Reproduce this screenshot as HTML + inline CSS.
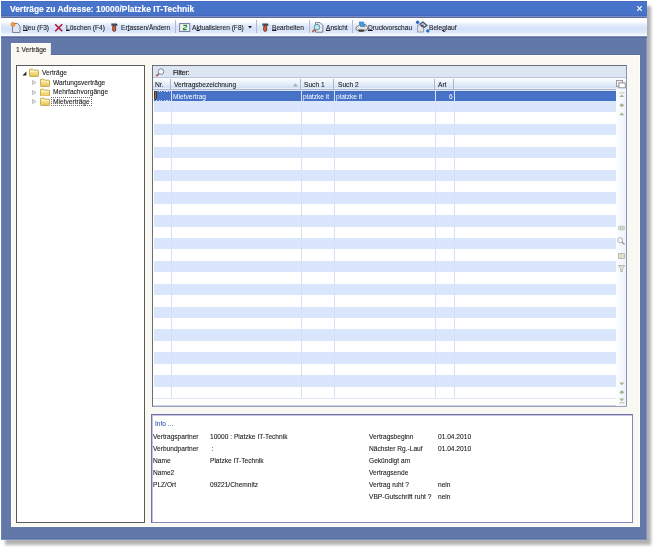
<!DOCTYPE html>
<html><head><meta charset="utf-8">
<style>
*{margin:0;padding:0;box-sizing:border-box}
html,body{width:656px;height:549px;overflow:hidden;background:#fff;font-family:"Liberation Sans",sans-serif;color:#000}
.a{position:absolute;display:block}
.t{position:absolute;white-space:nowrap;line-height:8px;font-size:7.6px;color:#1a1a1a;transform:scaleX(.87);transform-origin:0 0;-webkit-text-stroke:.1px currentColor}
u{text-decoration-thickness:.4px;text-underline-offset:.3px}
#wrap{position:absolute;left:0;top:0;width:656px;height:549px;filter:blur(.35px)}
</style></head><body><div id="wrap">
<div class="a" style="left:5px;top:6px;width:646px;height:539px;background:#909090;filter:blur(1.5px);opacity:.7"></div>
<div class="a" style="left:1px;top:1px;width:646px;height:539px;background:#6178a8;box-shadow:inset 1px 0 0 #7286b8,inset -1px -1px 0 #7e92c2,inset 0 -2px 0 #5a70a2"></div>
<div class="a" style="left:1px;top:1px;width:646px;height:15px;background:linear-gradient(#3d62b8 0,#4874ca 1px,#4672c9 100%);"></div>
<div class="t" style="left:10px;top:2.5px;color:#fff;font-weight:bold;font-size:8.45px;letter-spacing:0;line-height:12px;transform:none;-webkit-text-stroke:.1px #fff">Verträge zu Adresse: 10000/Platzke IT-Technik</div>
<svg class="a" style="left:636px;top:5px" width="7" height="7" viewBox="0 0 7 7"><path d="M1.2 1.2L5.8 5.8M5.8 1.2L1.2 5.8" stroke="#fff" stroke-width="1.1"/></svg>
<div class="a" style="left:1px;top:15px;width:646px;height:1px;background:#4668b8;"></div>
<div class="a" style="left:1px;top:16px;width:646px;height:1px;background:#7890c6;"></div>
<div class="a" style="left:1px;top:17px;width:646px;height:1px;background:#5d6c9c;"></div>
<div class="a" style="left:1px;top:18px;width:646px;height:18px;background:linear-gradient(#ffffff 0%,#fcfdff 20%,#e2ebfb 40%,#d5e1fa 62%,#dde9fb 80%,#eef6fe 92%,#fbfeff 100%);"></div>
<div class="a" style="left:1px;top:36px;width:646px;height:1px;background:#7e8fb8;"></div>
<div class="a" style="left:1px;top:37px;width:646px;height:1px;background:#586a9e;"></div>
<div class="a" style="left:11px;top:54px;width:629px;height:1px;background:#5a6c9e;"></div>
<div class="t" style="left:22.6px;top:23.6px;"><u>N</u>eu (F3)</div>
<div class="t" style="left:65.8px;top:23.6px;"><u>L</u>öschen (F4)</div>
<div class="t" style="left:120.7px;top:23.6px;">Er<u>f</u>assen/Ändern</div>
<div class="t" style="left:191.5px;top:23.6px;">A<u>k</u>tualisieren (F8)</div>
<div class="t" style="left:271.8px;top:23.6px;"><u>B</u>earbeiten</div>
<div class="t" style="left:325.9px;top:23.6px;"><u>A</u>nsicht</div>
<div class="t" style="left:368.4px;top:23.6px;"><u>D</u>ruckvorschau</div>
<div class="t" style="left:428.6px;top:23.6px;">Bele<u>g</u>lauf</div>
<div class="a" style="left:174.5px;top:19.8px;width:1.2px;height:13.2px;background:#b4bccb;"></div>
<div class="a" style="left:255.5px;top:19.8px;width:1.2px;height:13.2px;background:#b4bccb;"></div>
<div class="a" style="left:308.5px;top:19.8px;width:1.2px;height:13.2px;background:#b4bccb;"></div>
<div class="a" style="left:352px;top:19.8px;width:1.2px;height:13.2px;background:#b4bccb;"></div>
<svg class="a" style="left:10px;top:21px" width="12" height="13" viewBox="0 0 12 13"><path d="M2.5 2.5h5l2.5 2.5v6.5h-7.5z" fill="#dde4f2" stroke="#7c8496" stroke-width="1"/><circle cx="3" cy="3.4" r="2" fill="#f0a030" stroke="#e07018" stroke-width=".6"/></svg>
<svg class="a" style="left:54px;top:23px" width="10" height="10" viewBox="0 0 10 10"><path d="M1.2 1.2L8.2 8.2M8.2 1.2L1.2 8.2" stroke="#b01838" stroke-width="1.6"/></svg>
<svg class="a" style="left:110.5px;top:22.8px" width="8" height="9" viewBox="0 0 8 9"><path d="M.4 .6h5.2l.9 1.2v1H.4z" fill="#3a3e46"/><path d="M.6 .8h4" stroke="#9aa0a8" stroke-width=".5"/><rect x="1.7" y="2.7" width="3" height="5.6" rx="1.2" fill="#e0603a" stroke="#3a1808" stroke-width=".7"/></svg>
<svg class="a" style="left:262px;top:23.2px" width="8" height="9" viewBox="0 0 8 9"><path d="M.4 .6h5.2l.9 1.2v1H.4z" fill="#3a3e46"/><path d="M.6 .8h4" stroke="#9aa0a8" stroke-width=".5"/><rect x="1.7" y="2.7" width="3" height="5.6" rx="1.2" fill="#e0603a" stroke="#3a1808" stroke-width=".7"/></svg>
<svg class="a" style="left:179px;top:22.8px" width="12" height="9" viewBox="0 0 12 9"><rect x=".6" y=".6" width="10.2" height="7.8" fill="#eef6f4" stroke="#6a6e98" stroke-width=".9"/><path d="M4.3 2.4h3.2v1.5L4.5 5.5v1.1h3.2" stroke="#2a8a3a" stroke-width="1.15" fill="none"/><path d="M2 4.5h7.5" stroke="#c0e8c8" stroke-width=".5"/></svg>
<svg class="a" style="left:247.5px;top:25.6px" width="4" height="3" viewBox="0 0 4 3"><path d="M0 0h4l-2 2.5z" fill="#202020"/></svg>
<svg class="a" style="left:311px;top:21.5px" width="13" height="12" viewBox="0 0 13 12"><path d="M4.5 .6h4.5l2.8 2.8v6.8h-7.3z" fill="#eef0f6" stroke="#6a7080" stroke-width=".9"/><circle cx="6" cy="5.2" r="2.9" fill="#b8e4f0" stroke="#5a8a98" stroke-width=".9"/><path d="M4 7.4L1.4 10" stroke="#b86a4a" stroke-width="2"/></svg>
<svg class="a" style="left:355px;top:21px" width="13" height="11" viewBox="0 0 13 11"><path d="M1 6.5L5 3.5h5.5l2 3v2l-4.5 2H4.5L1 8.5z" fill="#e4e4e4" stroke="#606860" stroke-width=".8"/><path d="M4 1h4.5l1.5 4.5H5.5z" fill="#4a9ad8" stroke="#3070b0" stroke-width=".6"/><path d="M3 8.5h7l-2 2H4z" fill="#3a4038"/></svg>
<svg class="a" style="left:414.5px;top:20px" width="15" height="13" viewBox="0 0 15 13"><rect x="2.5" y="5" width="6" height="7" fill="#dde2ee" stroke="#8a90a0" stroke-width=".8"/><path d="M5 4l3-2 4 3.5-3 2zM6 6.5l2.5-1.5" stroke="#445066" stroke-width="1.1" fill="#c8d0de"/><circle cx="2.6" cy="2.3" r="1.7" fill="#2a6cc8"/><circle cx="12.8" cy="10.9" r="1.7" fill="#2a6cc8"/></svg>
<div class="a" style="left:11px;top:55px;width:629px;height:472px;background:#f9f8f3;border-top:1px solid #fff;border-left:1px solid #fff;border-bottom:1px solid #fff;border-right:1px solid #fff"></div>
<div class="a" style="left:11px;top:43px;width:40px;height:13px;background:#f9f8f3;border-top:1px solid #fff;border-left:1px solid #fff;border-right:1px solid #e4e8f2"></div>
<div class="t" style="left:16px;top:45.6px;">1 Verträge</div>
<div class="a" style="left:16px;top:65px;width:129px;height:458px;background:#fff;border:1px solid #5a5a5a"></div>
<svg class="a" style="left:22px;top:71px" width="5" height="5" viewBox="0 0 5 5"><path d="M4.4 .4V4.4H.4z" fill="#262626"/></svg>
<svg width="0" height="0" style="position:absolute"><defs><linearGradient id="fg" x1="0" y1="0" x2="0" y2="1"><stop offset="0" stop-color="#fff2b0"/><stop offset="1" stop-color="#e8c458"/></linearGradient></defs></svg>
<svg class="a" style="left:29px;top:68.3px" width="10" height="8.5" viewBox="0 0 10 8.5"><path d="M1 1.2h2.8l1 1h4.2q.6 0 .6.6v4.8q0 .8-.8.8H1.2q-.8 0-.8-.8V1.8q0-.6.6-.6z" fill="url(#fg)" stroke="#c0a040" stroke-width=".9"/><path d="M1 3.4h8" stroke="#fff8d8" stroke-width=".7"/></svg>
<div class="t" style="left:42.2px;top:68.6px;">Verträge</div>
<svg class="a" style="left:32px;top:80.10000000000001px" width="4.5" height="5" viewBox="0 0 4.5 5"><path d="M.6 .6L3.8 2.5L.6 4.4z" fill="#fff" stroke="#a0a0a0" stroke-width=".8"/></svg>
<svg class="a" style="left:39.5px;top:78.4px" width="10" height="8.5" viewBox="0 0 10 8.5"><path d="M1 1.2h2.8l1 1h4.2q.6 0 .6.6v4.8q0 .8-.8.8H1.2q-.8 0-.8-.8V1.8q0-.6.6-.6z" fill="url(#fg)" stroke="#c0a040" stroke-width=".9"/><path d="M1 3.4h8" stroke="#fff8d8" stroke-width=".7"/></svg>
<div class="t" style="left:52.8px;top:78.5px;">Wartungsverträge</div>
<svg class="a" style="left:32px;top:89.5px" width="4.5" height="5" viewBox="0 0 4.5 5"><path d="M.6 .6L3.8 2.5L.6 4.4z" fill="#fff" stroke="#a0a0a0" stroke-width=".8"/></svg>
<svg class="a" style="left:39.5px;top:87.8px" width="10" height="8.5" viewBox="0 0 10 8.5"><path d="M1 1.2h2.8l1 1h4.2q.6 0 .6.6v4.8q0 .8-.8.8H1.2q-.8 0-.8-.8V1.8q0-.6.6-.6z" fill="url(#fg)" stroke="#c0a040" stroke-width=".9"/><path d="M1 3.4h8" stroke="#fff8d8" stroke-width=".7"/></svg>
<div class="t" style="left:52.8px;top:87.89999999999999px;">Mehrfachvorgänge</div>
<svg class="a" style="left:32px;top:99.10000000000001px" width="4.5" height="5" viewBox="0 0 4.5 5"><path d="M.6 .6L3.8 2.5L.6 4.4z" fill="#fff" stroke="#a0a0a0" stroke-width=".8"/></svg>
<svg class="a" style="left:39.5px;top:97.4px" width="10" height="8.5" viewBox="0 0 10 8.5"><path d="M1 1.2h2.8l1 1h4.2q.6 0 .6.6v4.8q0 .8-.8.8H1.2q-.8 0-.8-.8V1.8q0-.6.6-.6z" fill="url(#fg)" stroke="#c0a040" stroke-width=".9"/><path d="M1 3.4h8" stroke="#fff8d8" stroke-width=".7"/></svg>
<div class="t" style="left:52.8px;top:97.5px;">Mietverträge</div>
<div class="a" style="left:51.3px;top:97.4px;width:40.5px;height:9px;background:transparent;border:1px dotted #707070"></div>
<div class="a" style="left:152px;top:65px;width:475px;height:342px;background:#fff;border:1px solid #6a6e78;border-right-color:#8c94b0;border-bottom-color:#9aa2bc;box-shadow:inset -1px -1px 0 #d0d4e4"></div>
<div class="a" style="left:153px;top:66px;width:473px;height:11px;background:#dde5f3;"></div>
<div class="a" style="left:153px;top:77px;width:473px;height:1px;background:#b9c3da;"></div>
<div class="a" style="left:153px;top:78px;width:473px;height:11px;background:linear-gradient(#fbfdff 0%,#eef4fd 35%,#d3e1f5 88%,#f4f8ff 100%);"></div>
<div class="a" style="left:153px;top:89px;width:463px;height:1px;background:#aab6cf;"></div>
<div class="t" style="left:172.8px;top:68.5px;-webkit-text-stroke:.2px #1a1a1a">Filter:</div>
<svg class="a" style="left:155px;top:67.5px" width="10" height="9" viewBox="0 0 10 9"><circle cx="6" cy="3.6" r="2.8" fill="#f4f8fa" stroke="#7a8a98" stroke-width="1"/><path d="M3.8 5.8L1.2 8.2" stroke="#a86a4a" stroke-width="1.8"/></svg>
<div class="a" style="left:616px;top:89px;width:10px;height:317px;background:linear-gradient(90deg,#fcfdff,#edf2fc);"></div>
<div class="a" style="left:154px;top:101.02px;width:462px;height:11.42px;background:#d9e6fb;"></div>
<div class="a" style="left:154px;top:123.86px;width:462px;height:11.42px;background:#d9e6fb;"></div>
<div class="a" style="left:154px;top:146.70px;width:462px;height:11.42px;background:#d9e6fb;"></div>
<div class="a" style="left:154px;top:169.54px;width:462px;height:11.42px;background:#d9e6fb;"></div>
<div class="a" style="left:154px;top:192.38px;width:462px;height:11.42px;background:#d9e6fb;"></div>
<div class="a" style="left:154px;top:215.22px;width:462px;height:11.42px;background:#d9e6fb;"></div>
<div class="a" style="left:154px;top:238.06px;width:462px;height:11.42px;background:#d9e6fb;"></div>
<div class="a" style="left:154px;top:260.90px;width:462px;height:11.42px;background:#d9e6fb;"></div>
<div class="a" style="left:154px;top:283.74px;width:462px;height:11.42px;background:#d9e6fb;"></div>
<div class="a" style="left:154px;top:306.58px;width:462px;height:11.42px;background:#d9e6fb;"></div>
<div class="a" style="left:154px;top:329.42px;width:462px;height:11.42px;background:#d9e6fb;"></div>
<div class="a" style="left:154px;top:352.26px;width:462px;height:11.42px;background:#d9e6fb;"></div>
<div class="a" style="left:154px;top:375.10px;width:462px;height:11.42px;background:#d9e6fb;"></div>
<div class="a" style="left:154px;top:90px;width:462px;height:1px;background:#dce6f6;"></div>
<div class="a" style="left:154px;top:90.8px;width:462px;height:10.4px;background:linear-gradient(#3f64b8 0,#4672c8 1px,#4672c8 9.4px,#3f66bc 10.4px);"></div>
<div class="a" style="left:153px;top:397.5px;width:463px;height:1px;background:#e0e8f6;"></div>
<div class="a" style="left:170px;top:79px;width:1px;height:10px;background:#b0b8c8;"></div>
<div class="a" style="left:300px;top:79px;width:1px;height:10px;background:#b0b8c8;"></div>
<div class="a" style="left:333px;top:79px;width:1px;height:10px;background:#b0b8c8;"></div>
<div class="a" style="left:434px;top:79px;width:1px;height:10px;background:#b0b8c8;"></div>
<div class="a" style="left:453px;top:79px;width:1px;height:10px;background:#b0b8c8;"></div>
<div class="a" style="left:171px;top:90px;width:1px;height:308px;background:#d6e1f3;"></div>
<div class="a" style="left:301px;top:90px;width:1px;height:308px;background:#d6e1f3;"></div>
<div class="a" style="left:334px;top:90px;width:1px;height:308px;background:#d6e1f3;"></div>
<div class="a" style="left:435px;top:90px;width:1px;height:308px;background:#d6e1f3;"></div>
<div class="a" style="left:454px;top:90px;width:1px;height:308px;background:#d6e1f3;"></div>
<div class="t" style="left:155px;top:81px;">Nr.</div>
<div class="t" style="left:174px;top:81px;">Vertragsbezeichnung</div>
<div class="t" style="left:303.6px;top:81px;">Such 1</div>
<div class="t" style="left:337.6px;top:81px;">Such 2</div>
<div class="t" style="left:438.3px;top:81px;">Art</div>
<svg class="a" style="left:292.5px;top:83px" width="5" height="4" viewBox="0 0 5 4"><path d="M0 3.5L2.4 .3L4.8 3.5z" fill="#a8acb4"/></svg>
<div class="t" style="left:173.2px;top:93px;color:#fff;-webkit-text-stroke:0">Mietvertrag</div>
<div class="t" style="left:302.9px;top:93px;color:#fff;-webkit-text-stroke:0">platzke it</div>
<div class="t" style="left:336px;top:93px;color:#fff;-webkit-text-stroke:0">platzke it</div>
<div class="t" style="left:448.7px;top:93px;color:#fff;-webkit-text-stroke:0">6</div>
<div class="a" style="left:156px;top:90.8px;width:15px;height:1px;background:repeating-linear-gradient(90deg,#c8d8f8 0 1.2px,transparent 1.2px 2.6px);"></div>
<div class="a" style="left:156px;top:99.8px;width:15px;height:1px;background:repeating-linear-gradient(90deg,#c8d8f8 0 1.2px,transparent 1.2px 2.6px);"></div>
<svg class="a" style="left:154px;top:91.4px" width="3" height="9" viewBox="0 0 3 9"><path d="M.4 .4h2v7.2l-1 1l-1-1z" fill="#9a7440" stroke="#2a1a08" stroke-width=".7"/></svg>
<svg class="a" style="left:616px;top:80px" width="10" height="9" viewBox="0 0 10 9"><rect x=".5" y=".5" width="6" height="6" fill="#e8e8e8" stroke="#909090" stroke-width=".8"/><rect x="3" y="3" width="6.2" height="4.8" fill="#fff" stroke="#808080" stroke-width=".8"/></svg>
<svg class="a" style="left:618.5px;top:91.8px" width="6" height="6" viewBox="0 0 6 6"><path d="M.3 .8h5" stroke="#c4d0a8" stroke-width="1"/><path d="M.3 5L2.8 2.4L5.3 5z" fill="#a4b48c"/></svg>
<svg class="a" style="left:618.5px;top:102.6px" width="6" height="5" viewBox="0 0 6 5"><path d="M2.8 .2L5.3 2.2L2.8 4.2L.3 2.2z" fill="#a4b48c"/></svg>
<svg class="a" style="left:618.5px;top:111.8px" width="6" height="4" viewBox="0 0 6 4"><path d="M.3 3.3L2.8 .6L5.3 3.3z" fill="#a4b48c"/></svg>
<svg class="a" style="left:617.5px;top:225px" width="7" height="7" viewBox="0 0 7 7"><path d="M1.2 .8Q.2 3 1.2 5.2M5.8 .8Q6.8 3 5.8 5.2M2.7 .5v5M4.3 .5v5" stroke="#a8b098" stroke-width=".9" fill="none"/></svg>
<svg class="a" style="left:617px;top:236.5px" width="8" height="8" viewBox="0 0 8 8"><circle cx="3.2" cy="3.2" r="2.5" fill="none" stroke="#a8a8a8" stroke-width=".9"/><path d="M5 5L7.6 7.6" stroke="#909090" stroke-width="1.2"/></svg>
<svg class="a" style="left:617.5px;top:252.5px" width="7" height="6" viewBox="0 0 7 6"><path d="M.5 .5h6v5h-6z" fill="#e0e0d0" stroke="#b0b0a0" stroke-width=".8"/></svg>
<svg class="a" style="left:617.5px;top:265px" width="7" height="7" viewBox="0 0 7 7"><path d="M.3 .5h6.4L4.3 3.5V6.5H2.7V3.5z" fill="#e4e6da" stroke="#a8aa98" stroke-width=".8"/></svg>
<svg class="a" style="left:618.5px;top:381.8px" width="6" height="4" viewBox="0 0 6 4"><path d="M.3 .6L2.8 3.3L5.3 .6z" fill="#a4b48c"/></svg>
<svg class="a" style="left:618.5px;top:390px" width="6" height="5" viewBox="0 0 6 5"><path d="M2.8 .2L5.3 2.2L2.8 4.2L.3 2.2z" fill="#a4b48c"/></svg>
<svg class="a" style="left:618.5px;top:397.5px" width="6" height="6" viewBox="0 0 6 6"><path d="M.3 .6L2.8 3.2L5.3 .6z" fill="#a4b48c"/><path d="M.3 4.8h5" stroke="#b8c49c" stroke-width="1"/></svg>
<div class="a" style="left:151px;top:414px;width:482px;height:109px;background:#fff;border:1px solid #7470a8;border-right-color:#8a86b8;border-bottom-color:#8a86b8;box-shadow:inset 1px 1px 0 #c4c2e0"></div>
<div class="t" style="left:154.9px;top:420px;color:#3a5aa8">Info ...</div>
<div class="t" style="left:153.4px;top:433.2px;">Vertragspartner</div>
<div class="t" style="left:210.2px;top:433.2px;">10000 : Platzke IT-Technik</div>
<div class="t" style="left:153.4px;top:445.0px;">Verbundpartner</div>
<div class="t" style="left:210.2px;top:445.0px;">&nbsp;:</div>
<div class="t" style="left:153.4px;top:456.7px;">Name</div>
<div class="t" style="left:210.2px;top:456.7px;">Platzke IT-Technik</div>
<div class="t" style="left:153.4px;top:468.7px;">Name2</div>
<div class="t" style="left:153.4px;top:480.7px;">PLZ/Ort</div>
<div class="t" style="left:210.2px;top:480.7px;">09221/Chemnitz</div>
<div class="t" style="left:369px;top:433.2px;">Vertragsbeginn</div>
<div class="t" style="left:438px;top:433.2px;">01.04.2010</div>
<div class="t" style="left:369px;top:445.0px;">Nächster Rg.-Lauf</div>
<div class="t" style="left:438px;top:445.0px;">01.04.2010</div>
<div class="t" style="left:369px;top:456.7px;">Gekündigt am</div>
<div class="t" style="left:369px;top:468.7px;">Vertragsende</div>
<div class="t" style="left:369px;top:480.7px;">Vertrag ruht ?</div>
<div class="t" style="left:438px;top:480.7px;">nein</div>
<div class="t" style="left:369px;top:492.5px;">VBP-Gutschrift ruht ?</div>
<div class="t" style="left:438px;top:492.5px;">nein</div>
</div></body></html>
